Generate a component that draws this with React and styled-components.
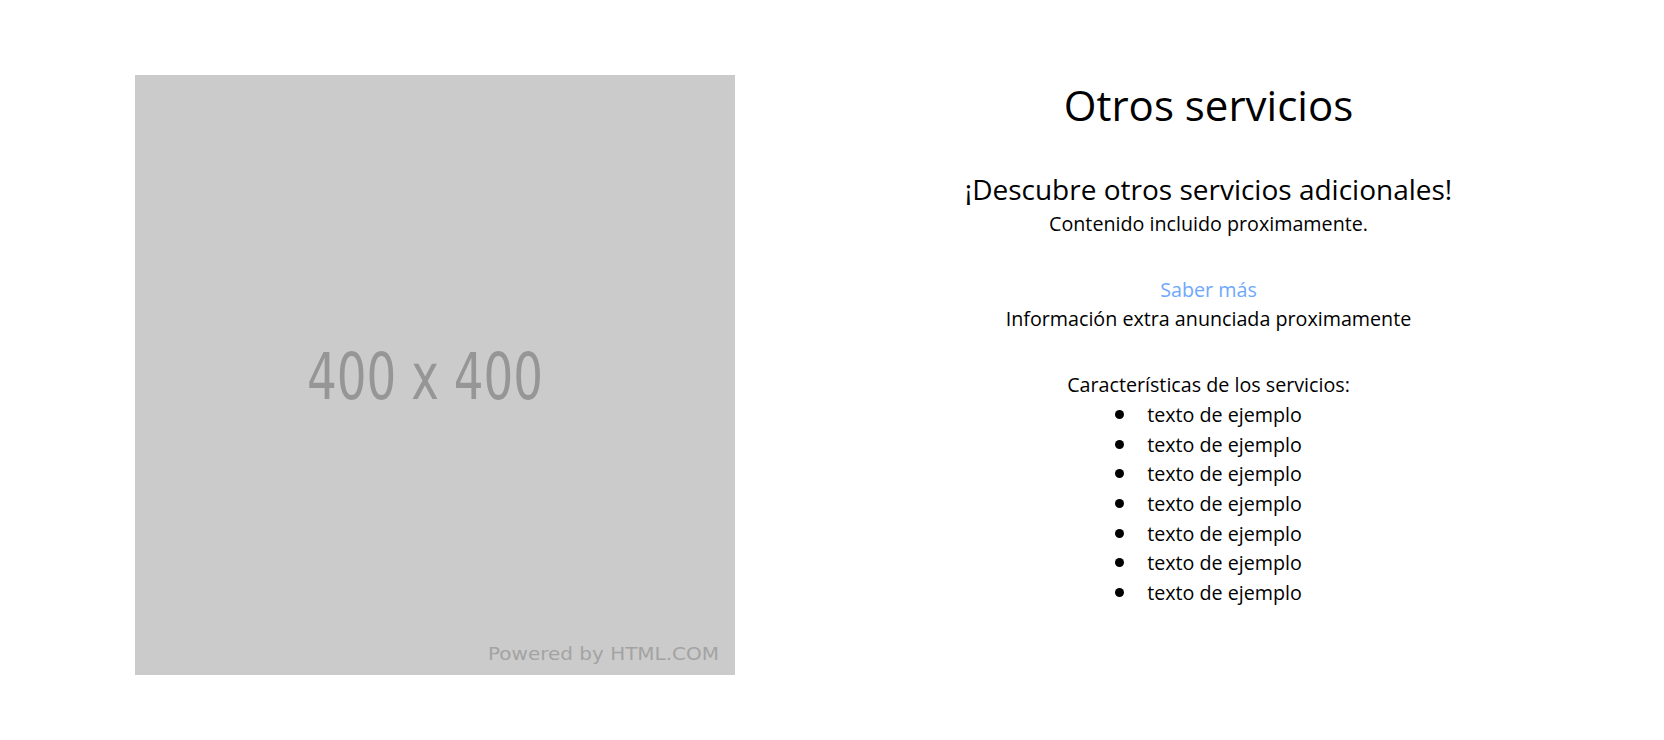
import React from "react";
import styled, { createGlobalStyle } from "styled-components";

const GlobalStyle = createGlobalStyle`
  html, body {
    margin: 0;
    padding: 0;
    background: #ffffff;
  }
  body {
    font-family: "Open Sans", "Noto Sans", sans-serif;
    color: #000000;
  }
`;

const Section = styled.section`
  display: flex;
  align-items: flex-start;
  gap: 100px;
  padding: 75px 82px 0 135px;
`;

const Placeholder = styled.svg`
  display: block;
  flex: none;
  width: 600px;
  height: 600px;
`;

const Content = styled.div`
  flex: 1;
  display: flex;
  flex-direction: column;
  align-items: center;
  text-align: center;
`;

const Title = styled.h1`
  margin: 0;
  font-size: 42px;
  font-weight: 400;
  line-height: 60px;
`;

const Subtitle = styled.h4`
  margin: 34px 0 0;
  font-size: 28px;
  font-weight: 400;
  line-height: 40px;
`;

const Text = styled.p`
  margin: ${(props) => (props.spaced ? "36px" : "0")} 0 0;
  font-size: 19.7px;
  line-height: 29.7px;
`;

const Link = styled.a`
  display: block;
  margin-top: 36px;
  font-size: 19.7px;
  line-height: 29.7px;
  color: #6ea8fe;
  text-decoration: none;
`;

const List = styled.ul`
  margin: 0;
  padding: 0;
  list-style: none;
`;

const Item = styled.li`
  font-size: 19.7px;
  line-height: 29.7px;

  &::before {
    content: "";
    display: inline-block;
    width: 9px;
    height: 9px;
    border-radius: 50%;
    background: #000;
    margin-right: 23px;
    vertical-align: 3px;
  }
`;

const features = Array.from({ length: 7 }, () => "texto de ejemplo");

const App = () => {
  return (
    <>
      <GlobalStyle />
      <Section>
        <Placeholder viewBox="0 0 600 600">
          <rect width="600" height="600" fill="#cbcbcb" />
          <text
            x="172"
            y="324"
            fontFamily="DejaVu Sans Condensed, DejaVu Sans, sans-serif"
            fontSize="64.5"
            fill="#969696"
            textLength="236"
            lengthAdjust="spacingAndGlyphs"
          >
            400 x 400
          </text>
          <text
            x="353"
            y="585"
            fontFamily="DejaVu Sans, sans-serif"
            fontSize="18.5"
            fill="#a3a3a3"
            textLength="231"
            lengthAdjust="spacingAndGlyphs"
          >
            Powered by HTML.COM
          </text>
        </Placeholder>
        <Content>
          <Title>Otros servicios</Title>
          <Subtitle>¡Descubre otros servicios adicionales!</Subtitle>
          <Text>Contenido incluido proximamente.</Text>
          <Link href="#">Saber más</Link>
          <Text>Información extra anunciada proximamente</Text>
          <Text spaced>Características de los servicios:</Text>
          <List>
            {features.map((f, i) => (
              <Item key={i}>{f}</Item>
            ))}
          </List>
        </Content>
      </Section>
    </>
  );
};

export default App;
